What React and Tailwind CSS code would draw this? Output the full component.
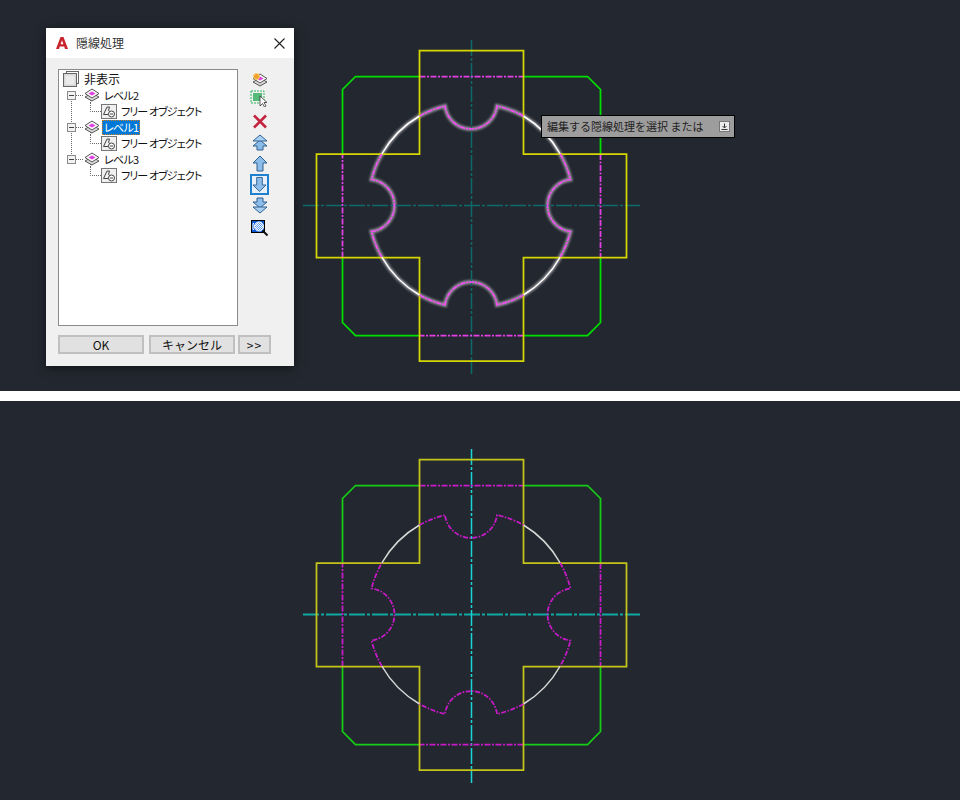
import React from 'react';

const gearHidden = [
  'M419.5 116A103 103 0 0 1 445 106A26.2 26.2 0 0 0 497 106A103 103 0 0 1 523.5 116',
  'M560.2 154A103 103 0 0 1 570.5 179.5A26.2 26.2 0 0 0 570.5 231.5A103 103 0 0 1 560.2 257',
  'M523.5 295A103 103 0 0 1 497 305A26.2 26.2 0 0 0 445 305A103 103 0 0 1 419.5 295',
  'M381.8 257A103 103 0 0 1 371.5 231.5A26.2 26.2 0 0 0 371.5 179.5A103 103 0 0 1 381.8 154',
].join('');

const gearVisible = [
  'M381.8 154A103 103 0 0 1 419.5 116',
  'M523.5 116A103 103 0 0 1 560.2 154',
  'M560.2 257A103 103 0 0 1 523.5 295',
  'M419.5 295A103 103 0 0 1 381.8 257',
].join('');

const crossOutline = 'M419.5 50.5H523.5V154H626.5V257.5H523.5V361H419.5V257.5H316.5V154H419.5Z';
const greenOutline = [
  'M419.5 76.5H355.5L342.5 89.5V154',
  'M523.5 76.5H587.5L600.5 89.5V154',
  'M600.5 257V322.5L587.5 335.5H523.5',
  'M419.5 335.5H355.5L342.5 322.5V257',
].join('');
const hiddenEdges = 'M419.5 76.5H523.5M600.5 154V257.5M523.5 335.5H419.5M342.5 257.5V154';

function Drawing({ viewY, height, highlighted, center, centerV, magenta, yellow, green }) {
  return (
    <svg className="block" width="960" height={height} viewBox={`0 ${viewY} 960 ${height}`} fill="none">
      {highlighted && (
        <>
          <filter id="halo" x="-10%" y="-10%" width="120%" height="120%">
            <feGaussianBlur stdDeviation="0.9" />
          </filter>
          <path d={gearHidden + gearVisible} stroke="#c8c4ca" strokeWidth="4" opacity="0.65" filter="url(#halo)" />
        </>
      )}
      <path d="M303 205.5H640" stroke={center} strokeWidth={highlighted ? 1.5 : 2} strokeDasharray="16 2 3 2" />
      <path d="M471.5 40V374" stroke={centerV} strokeWidth="1.5" strokeDasharray="16 2 3 2" />
      <path d={greenOutline} stroke={green} strokeWidth="1.75" />
      <path d={hiddenEdges} stroke={magenta} strokeWidth="1.75" strokeDasharray="6 1.5 2 1.5" />
      <path d={crossOutline} stroke={yellow} strokeWidth="1.75" />
      <path d={gearVisible} stroke={highlighted ? '#ffffff' : '#d8d8d8'} strokeWidth="1.5" />
      <path
        d={gearHidden}
        stroke={highlighted ? '#f04cf0' : magenta}
        strokeWidth="1.75"
        strokeDasharray={highlighted ? '5 1 2 1' : '5 1.5 1.5 1.5'}
      />
    </svg>
  );
}

function LayerIcon({ sun }) {
  return (
    <svg width="16" height="14" viewBox="0 0 16 14">
      <polygon points="8,5 15,9 8,13 1,9" fill="#d8d8d8" stroke="#555" />
      <polygon points="8,1 15,5.5 8,10 1,5.5" fill="#f6f6f6" stroke="#555" />
      <polygon points="8,3.5 11.5,5.5 8,7.5 4.5,5.5" fill="#e23fe2" />
      {sun && <circle cx="4.5" cy="3.5" r="3" fill="#f0a030" stroke="#f8d070" />}
    </svg>
  );
}

function FreeObjectIcon() {
  return (
    <svg width="16" height="15" viewBox="0 0 16 15" className="shrink-0">
      <rect x="0.5" y="0.5" width="15" height="14" fill="#f0f0f0" stroke="#777" />
      <path d="M2.5 10.5L6 3H8.5L7.5 6.5L9.5 8" fill="none" stroke="#444" />
      <path d="M2.5 10.5H7" stroke="#444" />
      <circle cx="10.5" cy="10" r="3" fill="#fff" stroke="#444" />
      <path d="M9 10H12" stroke="#444" />
    </svg>
  );
}

function HiddenRootIcon() {
  return (
    <svg width="16" height="16" viewBox="0 0 16 16" className="shrink-0">
      <rect x="3.5" y="0.5" width="12" height="12" fill="#fff" stroke="#666" />
      <rect x="0.5" y="2.5" width="13" height="13" fill="#d9d9d9" stroke="#666" />
      <rect x="2.5" y="4.5" width="9" height="9" fill="#ececec" />
    </svg>
  );
}

function LevelRow({ label, position, selected }) {
  return (
    <div className="flex items-center h-4">
      <svg width="43" height="16" viewBox="0 0 43 16" className="shrink-0">
        <path
          d={position === 'first' ? 'M12.5 12V16' : position === 'last' ? 'M12.5 0V4' : 'M12.5 0V4M12.5 12V16'}
          stroke="#666"
          strokeDasharray="1 1"
        />
        <path d="M17 8.5H25M31.5 13V16" stroke="#666" strokeDasharray="1 1" />
        <rect x="8.5" y="4.5" width="8" height="8" fill="#f2f2f2" stroke="#8a8a8a" />
        <path d="M10 8.5H15" stroke="#444" />
        <foreignObject x="25" y="1" width="16" height="14">
          <LayerIcon />
        </foreignObject>
      </svg>
      <span
        className={
          selected
            ? 'h-[15px] w-[38px] flex items-center px-[2px] whitespace-nowrap tracking-[-0.7px] bg-[#0078d7] text-white outline-1 outline-dotted outline-[#d08020] -outline-offset-1'
            : 'h-[15px] flex items-center px-[2px] whitespace-nowrap tracking-[-0.7px] text-[#111]'
        }
      >
        {label}
      </span>
    </div>
  );
}

function ChildRow({ last }) {
  return (
    <div className="flex items-center h-4">
      <svg width="42" height="16" viewBox="0 0 42 16" className="shrink-0">
        {!last && <path d="M12.5 0V16" stroke="#666" strokeDasharray="1 1" />}
        <path d="M31.5 0V8.5H42" fill="none" stroke="#666" strokeDasharray="1 1" />
      </svg>
      <FreeObjectIcon />
      <span className="ml-1 whitespace-nowrap tracking-[-0.9px] text-[#111]">フリー オブジェクト</span>
    </div>
  );
}

function Arrow({ down, double }) {
  const fill = '#8cbcea';
  const line = '#2f6092';
  return (
    <svg width="16" height="17" viewBox="0 0 16 17" className={down ? 'rotate-180' : ''}>
      {double ? (
        <>
          <polygon points="8,6 15,12 11,12 11,16 5,16 5,12 1,12" fill={fill} stroke={line} />
          <polygon points="8,1 15,7 1,7" fill="#a9d0f2" stroke={line} />
        </>
      ) : (
        <polygon points="8,1 15,8 11,8 11,16 5,16 5,8 1,8" fill={fill} stroke={line} />
      )}
    </svg>
  );
}

function SelectIcon() {
  return (
    <svg width="19" height="17" viewBox="0 0 19 17">
      <rect x="1" y="1" width="13" height="12" fill="none" stroke="#2fb45c" strokeDasharray="2 1" />
      <rect x="3" y="3" width="9" height="8" fill="#55b97a" />
      <polygon points="10,6 10,16 12.5,13.5 14.5,17 16,16 14,12.5 17,12.5" fill="#fff" stroke="#333" strokeWidth="0.8" />
    </svg>
  );
}

function DeleteIcon() {
  return (
    <svg width="16" height="15" viewBox="0 0 16 15">
      <path d="M2 1.5L14 13.5M14 1.5L2 13.5" stroke="#c4233f" strokeWidth="2.6" />
    </svg>
  );
}

function PreviewIcon() {
  return (
    <svg width="18" height="17" viewBox="0 0 18 17">
      <defs>
        <pattern id="checker" width="2" height="2" patternUnits="userSpaceOnUse">
          <rect width="2" height="2" fill="#ffffff" />
          <rect width="1" height="1" fill="#5a9af0" />
          <rect x="1" y="1" width="1" height="1" fill="#5a9af0" />
        </pattern>
      </defs>
      <rect x="0.5" y="0.5" width="13" height="12" fill="#0a5ad8" stroke="#000" />
      <path d="M3 3.5H2V9.5H3" fill="none" stroke="#fff" />
      <circle cx="8" cy="6.5" r="4.5" fill="url(#checker)" stroke="#ffffff" />
      <path d="M11.5 10.5L16.5 15.5" stroke="#111" strokeWidth="2" />
    </svg>
  );
}

function Toolbar() {
  const slot = 'h-[21px] w-[19px] flex items-center justify-center';
  return (
    <div className="flex flex-col ml-3">
      <div className={slot}><LayerIcon sun /></div>
      <div className={`${slot} -mt-[2px] mb-[2px]`}><SelectIcon /></div>
      <div className={slot}><DeleteIcon /></div>
      <div className={slot}><Arrow double /></div>
      <div className={slot}><Arrow /></div>
      <div className={`${slot} border-2 border-[#1f80d0] bg-[#e8f1fa]`}><Arrow down /></div>
      <div className={slot}><Arrow down double /></div>
      <div className={`${slot} mt-[2px]`}><PreviewIcon /></div>
    </div>
  );
}

function DialogButton({ width, children }) {
  return (
    <button className={`${width} h-[19px] bg-[#e1e1e1] border-2 border-[#c0c0c0] flex items-center justify-center text-[12px] text-[#111]`}>
      {children}
    </button>
  );
}

function HideDialog() {
  return (
    <div className="absolute left-[46px] top-[28px] w-[248px] h-[338px] flex flex-col bg-[#f0f0f0] shadow-[0_2px_10px_rgba(0,0,0,0.55)] font-['Noto_Sans_CJK_JP',sans-serif]">
      <div className="h-[30px] bg-white flex items-center pl-[10px] pr-[9px]">
        <svg width="12" height="12" viewBox="0 0 12 12">
          <path d="M0 12L4.5 0H7.5L12 12H9L8.2 9.5H3.8L3 12ZM4.6 7.2H7.4L6 3.2Z" fill="#c8242c" fillRule="evenodd" />
        </svg>
        <span className="ml-2 text-[12px] text-[#333]">隠線処理</span>
        <svg width="11" height="11" viewBox="0 0 11 11" className="ml-auto">
          <path d="M0.5 0.5L10.5 10.5M10.5 0.5L0.5 10.5" stroke="#222" strokeWidth="1.1" />
        </svg>
      </div>
      <div className="flex-1 px-3 pt-[11px]">
        <div className="flex items-start">
          <div className="w-[180px] h-[257px] bg-white border border-[#8a8a8a] pt-px text-[11px] [font-feature-settings:'palt']">
            <div className="flex items-center h-4 pl-[4px]">
              <HiddenRootIcon />
              <span className="ml-[5px] text-[12px] text-[#111]">非表示</span>
            </div>
            <LevelRow label="レベル2" position="first" />
            <ChildRow />
            <LevelRow label="レベル1" selected />
            <ChildRow />
            <LevelRow label="レベル3" position="last" />
            <ChildRow last />
          </div>
          <Toolbar />
        </div>
        <div className="flex mt-[9px]">
          <DialogButton width="w-[86px]">OK</DialogButton>
          <DialogButton width="w-[86px] ml-[5px]">キャンセル</DialogButton>
          <DialogButton width="w-[33px] ml-[3px] tracking-[1px]">&gt;&gt;</DialogButton>
        </div>
      </div>
    </div>
  );
}

function CommandTip() {
  return (
    <div className="absolute left-[541px] top-[115px] w-[194px] h-[23px] flex items-center pl-[5px] pr-[4px] bg-[#9d9d9d] border border-black font-['Noto_Sans_CJK_JP',sans-serif] text-[11px] text-[#222]">
      <span>編集する隠線処理を選択 または</span>
      <svg width="11" height="11" viewBox="0 0 11 11" className="ml-auto">
        <rect x="0.5" y="0.5" width="10" height="10" fill="#ececec" stroke="#777" />
        <path d="M5.5 2.5V6.5M3.5 5L5.5 7L7.5 5M2.5 8.5H8.5" fill="none" stroke="#333" />
      </svg>
    </div>
  );
}

export default function App() {
  return (
    <div className="w-[960px] h-[800px] flex flex-col bg-white overflow-hidden">
      <div className="relative h-[391px] bg-[#232830]">
        <Drawing
          viewY={0}
          height={391}
          highlighted
          center="#0d6a68"
          centerV="#0d6a68"
          magenta="#e63ee6"
          yellow="#d6d600"
          green="#00e000"
        />
        <HideDialog />
        <CommandTip />
      </div>
      <div className="h-[10px]" />
      <div className="h-[399px] bg-[#232830]">
        <Drawing
          viewY={-8}
          height={399}
          center="#10a8a4"
          centerV="#18d4d8"
          magenta="#c81ac8"
          yellow="#c4c41a"
          green="#16cc16"
        />
      </div>
    </div>
  );
}
